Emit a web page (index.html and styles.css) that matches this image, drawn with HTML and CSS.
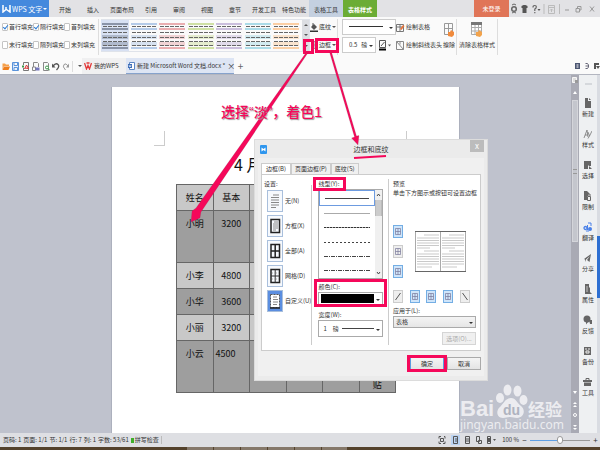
FILE: index.html
```html
<!DOCTYPE html>
<html lang="zh-CN">
<head>
<meta charset="utf-8">
<title>WPS 文字</title>
<link rel="stylesheet" href="styles.css">
</head>
<body>
<header class="titlebar">
  <button class="brand"><svg width="9" height="8" viewBox="0 0 9 8"><path d="M1 0v7l3-2.500V2M4.500 4.500L8 7V0" fill="none" stroke="#fff" stroke-width="1.500"/></svg><span>WPS 文字</span><i class="caret"></i></button>
  <nav class="menu">
    <a href="#">开始</a><a href="#">插入</a><a href="#" class="wide">页面布局</a><a href="#">引用</a><a href="#">审阅</a><a href="#">视图</a><a href="#">章节</a><a href="#" class="wide">开发工具</a><a href="#" class="wide">特色功能</a><a href="#" class="tool">表格工具</a><a href="#" class="tool current">表格样式</a>
  </nav>
  <button class="login">未登录</button>
  <div class="window-tools">
    <svg width="90" height="12" viewBox="0 0 90 12" fill="none" stroke="#666">
      <circle cx="5" cy="6" r="2.300" stroke-width="1.500"/><path d="M3 10l2-1 2 1M3 2l2-1 2 1"/>
      <path d="M12.500 3l2-1h2l2 1v2h-1v5h-4V5h-1z" fill="#555" stroke="none"/>
      <path d="M24 4.500q0-2 1.700-2t1.600 1.600q0 1.200-1.500 2V8M25.800 9v1.300" stroke-width="1.200"/><path d="M28.500 6h3l-1.500 2z" fill="#555" stroke="none"/>
      <path d="M35 1v10M50.500 1v10" stroke="#bbb"/><path d="M39.500 2.500h6v8h-6zM39.500 4.500h6M42.500 9V6M41 7.500L42.500 6 44 7.500" stroke="#bbb"/>
      <path d="M56 7h4" stroke="#999"/><path d="M67 5.500h3.500V9H67zM68.500 5V3.500H72V7h-1" stroke="#999"/><path d="M81 3.500l4 5M85 3.500l-4 5" stroke="#999"/>
    </svg>
  </div>
</header>

<section class="ribbon">
  <div class="fills">
    <label><input type="checkbox" checked>首行填充</label><label><input type="checkbox" checked>隔行填充</label><label><input type="checkbox">首列填充</label>
    <label><input type="checkbox">末行填充</label><label><input type="checkbox">隔列填充</label><label><input type="checkbox">末列填充</label>
  </div>
  <div class="gallery">
    <button class="swatch slate chosen" aria-label="样式 1"><svg viewBox="0 0 26 26"><use href="#sw"/></svg></button>
    <button class="swatch blue" aria-label="样式 2"><svg viewBox="0 0 26 26"><use href="#sw"/></svg></button>
    <button class="swatch red" aria-label="样式 3"><svg viewBox="0 0 26 26"><use href="#sw"/></svg></button>
    <button class="swatch green" aria-label="样式 4"><svg viewBox="0 0 26 26"><use href="#sw"/></svg></button>
    <button class="swatch purple" aria-label="样式 5"><svg viewBox="0 0 26 26"><use href="#sw"/></svg></button>
    <button class="swatch cyan" aria-label="样式 6"><svg viewBox="0 0 26 26"><use href="#sw"/></svg></button>
    <button class="swatch orange" aria-label="样式 7"><svg viewBox="0 0 26 26"><use href="#sw"/></svg></button>
    <div class="gallery-scroll"><button aria-label="上"><i class="caret up"></i></button><button aria-label="下"><i class="caret"></i></button><button aria-label="更多"><i class="caret"></i></button></div>
  </div>
  <div class="stack shade">
    <button><svg width="8" height="9" viewBox="0 0 8 9"><path d="M1 4l3-3 3 3-3 3z" fill="#555"/><path d="M3 3V0" stroke="#555"/><path d="M0 7.500h8v1.500H0z" fill="#333"/></svg>底纹<i class="caret"></i></button>
    <button><svg width="8" height="8" viewBox="0 0 8 8"><path d="M1.500.5h5v7h-5zM1.500 4h5M4 .5v7" fill="none" stroke="#999"/></svg>边框<i class="caret"></i></button>
  </div>
  <div class="stack pens">
    <div class="picker"><svg width="52" height="13" viewBox="0 0 52 13"><path d="M6 6.500h34" stroke="#333"/></svg><select aria-label="线型"><option></option></select></div>
    <div class="row"><div class="picker small"><select aria-label="粗细"><option>0.5&nbsp;&nbsp; 磅</option></select></div>
    <button aria-label="边框颜色"><svg width="12" height="11" viewBox="0 0 12 11"><path d="M.5.500h6v7h-6zM2 6l3.500-4" fill="none" stroke="#555"/><path d="M0 8.500h7v2H0z"/><path d="M9 4.500h3l-1.500 2z" fill="#555"/></svg></button></div>
  </div>
  <div class="stack draw">
    <button><svg width="9" height="9" viewBox="0 0 9 9"><path d="M.5 1.500h7v7h-7zM.5 4h7M4 1.500v7" fill="none" stroke="#777"/><path d="M4 6l3-4 1.500 1-3 4z" fill="#e8743b"/></svg>绘制表格</button>
    <button><svg width="9" height="9" viewBox="0 0 9 9"><path d="M.5.5h7v8h-7zM.5.500l7 8M4 .5v3" fill="none" stroke="#888"/></svg>绘制斜线表头</button>
  </div>
  <button class="big eraser"><svg width="12" height="15" viewBox="0 0 12 15"><path d="M1.500 1.500h8v11h-8zM1.500 6.500h8M5.500 1.500v11" fill="none" stroke="#999"/><path d="M5 10h2l1-2 3 2v3l-2 2-4-1z" fill="#f08a3c"/></svg>擦除</button>
  <button class="big clear"><svg width="12" height="15" viewBox="0 0 12 15"><path d="M.5.500h10v12H.5zM.5 5.500h10M.5 9h10M4 3v9.500M7.500 3v9.500" fill="#fff" stroke="#aaa"/><path d="M0 0h11v3H0z" fill="#777"/><path d="M5 10h2l1-2 3 2v3l-2 2-4-1z" fill="#f2a34c"/></svg>清除表格样式</button>
</section>

<div class="filebar">
  <div class="quick">
    <button aria-label="打开"><svg viewBox="0 0 8 9"><path d="M.5 8V1.500h2.500l1 1h3V4H2L.5 8" fill="#f5a04a"/><path d="M2 4.500h6L6.500 8h-6z" fill="#ee7d1b"/></svg></button>
    <button aria-label="保存"><svg viewBox="0 0 8 9"><path d="M.5.500h6v8h-6zM2 .5v3h3.500v-3M2 8.500v-3h3.500v3" fill="#eaf2fd" stroke="#5a93da"/></svg></button>
    <button aria-label="输出PDF"><svg viewBox="0 0 8 9"><path d="M1.500 3V.5h5v8h-5V6" fill="none" stroke="#777"/><path d="M2.500 7l2-4 2 3.500-3.500-.5" fill="none" stroke="#d33"/><path d="M0 3.500h2v2H0z" fill="#3b9a4a"/></svg></button>
    <button aria-label="打印"><svg viewBox="0 0 8 9"><path d="M1.500 5V.5h4l1 1V5M.5 5h3v3.500h-3z" fill="none" stroke="#888"/><path d="M3.500 5.500h4v3h-4z" fill="#7476bd"/></svg></button>
    <button aria-label="预览"><svg viewBox="0 0 8 9"><path d="M1.500 8.500v-8h4l1 1v7z" fill="none" stroke="#888"/><circle cx="5" cy="5.500" r="1.500" fill="#fff" stroke="#3b9a4a"/><path d="M6 6.500L8 8.500" stroke="#3b9a4a"/></svg></button>
    <button aria-label="撤销"><svg viewBox="0 0 8 9"><path d="M1 4q3-3.500 5-1.500T4.500 8" fill="none" stroke="#555" stroke-width="1.300"/><path d="M0 1.500v4h3.500z" fill="#555"/></svg></button>
    <button aria-label="恢复"><svg viewBox="0 0 8 9"><path d="M6 4Q4 .5 2 2.500T3.500 8" fill="none" stroke="#999"/><path d="M7 1.500v4H4z" fill="#999"/></svg></button>
    <i class="divider"></i><i class="caret"></i>
  </div>
  <a href="#" class="file"><svg width="8" height="8" viewBox="0 0 8 8"><path d="M.5 1l2 6L4 3.500 5.500 7l2-6M2.500 1h3" fill="none" stroke="#e33a3a" stroke-width="1.300"/></svg>我的WPS</a>
  <a href="#" class="file open"><svg width="7" height="8" viewBox="0 0 7 8"><path d="M1.500.5h5v7h-5z" fill="#fff" stroke="#5c86c5"/><path d="M0 2h4v4H0z" fill="#3c6db8"/><path d="M1 3l.5 2L2 3.500 2.500 5 3 3" fill="none" stroke="#fff" stroke-width=".5"/></svg><span>新建 Microsoft Word 文档.docx *</span><b>×</b></a>
  <button class="plus" aria-label="新标签">+</button>
  <svg class="views" width="26" height="8" viewBox="0 0 26 8"><path d="M1 1h5v6H1z" fill="#4c5672"/><path d="M2.500 3h2M2.500 5h2" stroke="#fff"/><path d="M11.500 1.500h2l1 1.500v2l-1 1.500h-2M11.500 4h2.500" fill="none" stroke="#667"/><path d="M20 1h5v2h-3v4h-2z" fill="#555"/><path d="M22 4h4l-2 3z" fill="#555"/></svg>
</div>

<main class="work">
  <div class="desk">
    <article class="page">
      <div class="marks"><i></i><i class="right"></i></div>
      <h1>4 月</h1>
      <table>
        <tr class="light"><th>姓名</th><th>基本</th><th></th><th></th><th></th><th></th></tr>
        <tr class="tall"><td>小明</td><td>3200</td><td></td><td></td><td></td><td></td></tr>
        <tr class="light"><td>小李</td><td>4800</td><td></td><td></td><td></td><td></td></tr>
        <tr><td>小华</td><td>3600</td><td></td><td></td><td></td><td></td></tr>
        <tr class="light"><td>小丽</td><td>3200</td><td></td><td></td><td></td><td></td></tr>
        <tr class="tall"><td>小云</td><td class="start">4500</td><td></td><td></td><td></td><td class="end">贴</td></tr>
      </table>
    </article>
    <svg class="watermark" width="112" height="52" viewBox="0 0 112 52" fill="#fff">
      <text x="1" y="35" class="wm-logo">Bai</text>
      <ellipse cx="41" cy="17" rx="4" ry="5"/><ellipse cx="48.500" cy="9" rx="4" ry="5.500"/><ellipse cx="58.500" cy="10" rx="4" ry="5.500"/><ellipse cx="64.500" cy="19" rx="4" ry="5"/>
      <path d="M52 17c5 0 6 5 10 8 5 4 3 12-4 12-3 0-4-1-7-1s-4 1-7 1c-7 0-7-8-3-11 4-4 6-9 11-9z"/>
      <text x="44" y="34" class="wm-du">du</text><text x="69" y="35" class="wm-cn">经验</text><text x="1" y="48" class="wm-url">jingyan.baidu.com</text>
    </svg>
  </div>
  <div class="vscroll">
    <svg width="8" height="25" viewBox="0 0 8 25"><path d="M1.500 2.500h4v5h-4z" fill="#ddd" stroke="#f5f5f5"/><path d="M4 5h3v3H4z" fill="#999"/><path d="M2 19l2-3 2 3z" fill="#fff"/></svg>
    <div class="thumb"><i></i></div>
    <svg class="jump" width="8" height="46" viewBox="0 0 8 46" fill="#fff"><path d="M2 4h4L4 7zM2 17l2-2 2 2zM2 20l2-2 2 2zM2 38h4l-2 2zM2 41h4l-2 2z"/><circle cx="4" cy="28" r="1.500" fill="none" stroke="#fff"/></svg>
  </div>
  <aside class="side">
    <i class="grip"></i>
    <button><svg viewBox="0 0 9 10"><path d="M2 0h3v3h3v7H2z"/><path d="M6 0l2 2H6z"/></svg>新建</button>
    <button><svg viewBox="0 0 9 10"><path d="M1 9l3-8 1 7M2 6h3M5 3l1.500 4L9 2M6.500 7L5 9.500" fill="none" stroke="#777" stroke-width=".8"/></svg>样式</button>
    <button><svg viewBox="0 0 9 10"><path d="M1 1h7v5H6L5 5v4H1z"/><path d="M6 6l3 3H6z"/></svg>选择</button>
    <button><svg viewBox="0 0 9 10"><path d="M1 0h3l2 2v3H4v4H1z"/><path d="M4.500 5.500h3v4h-3zM5 5V3h2v2" fill="#eee" stroke="#666"/></svg>限制</button>
    <button class="translate"><svg viewBox="0 0 9 10"><circle cx="2.500" cy="6" r="1.500" fill="none" stroke="#4a80e8" stroke-width="1.300"/><path d="M4.500 8V3M5 1h3v3M3 9h3" fill="none" stroke="#4a80e8"/><circle cx="7" cy="7" r="2" fill="#4a80e8"/></svg>翻译</button>
    <button><svg viewBox="0 0 9 10"><path d="M1 6l7-5-1.500 8L4 7l3-4-4 3.500V9L2 6.500z"/></svg>分享</button>
    <button><svg viewBox="0 0 9 10"><path d="M2 0h4v3l1 1v4l2 2H2z"/><path d="M3 3h2M3 5h2M3 7h2" stroke="#eee" stroke-width=".7"/></svg>属性</button>
    <button><svg viewBox="0 0 9 10"><circle cx="4" cy="4" r="3.500"/><path d="M3 7v2.500L5 7M6 5h3v4H7z"/></svg>反馈</button>
    <button><svg viewBox="0 0 9 10"><path d="M1 1h7v8H1z"/><path d="M2 3h2M5 3h2M3 7V5h3v2z" fill="none" stroke="#eee"/></svg>备份</button>
    <button><svg viewBox="0 0 9 10"><path d="M3 3V1.500h3V3" fill="none" stroke="#666"/><path d="M0 3h9v2H0zM1 5.500h7V9H1z"/></svg>工具</button>
  </aside>
  <div class="edge"><i></i></div>
</main>

<footer class="status">
  <span>页码: 1</span><span>页面: 1/1</span><span>节: 1/1</span><span>行: 7</span><span>列: 1</span><span>字数: 53/61</span><span class="spell"><i></i>拼写检查</span>
  <div class="zoom">
    <svg width="58" height="10" viewBox="0 0 58 10"><path d="M13 0h9v10h-9z" fill="#bcd4f2"/><g fill="none" stroke="#555"><path d="M3 1.500L1 1.500v2M6 1.500h1v2M1 6.500v2h2M7 6.500v2H5M2.500 3.500h3v3h-3z"/><path d="M15.500 1.500h4v7h-4zM17 4h2M17 6h2M27.500 1.500h4v7h-4zM27.500 4h4M27.500 6h4M38.500 1.500h3v5h-3zM40.500 5.500h3v3h-3zM49.500 1.500h3v7h-3z"/><path d="M51 3v4" stroke-width="2"/></g><path d="M55 4h3l-1.500 2z" fill="#555"/></svg>
    <output>100 %</output><button aria-label="缩小">−</button><input type="range" aria-label="显示比例" value="50"><button aria-label="放大">+</button>
  </div>
</footer>
<div class="taskbar"><i></i></div>

<section class="dialog" role="dialog" aria-label="边框和底纹">
  <div class="dialog-head">
    <svg width="7" height="9" viewBox="0 0 7 9"><rect width="7" height="9" rx="1" fill="#2f96ee"/><path d="M1.500 2.500v4l2-1.500 2 1.500v-4l-2 1.500z" fill="#fff"/></svg>
    <h2>边框和底纹</h2><button aria-label="关闭">x</button>
  </div>
  <div class="client">
    <div class="tabs"><button class="active">边框(B)</button><button>页面边框(P)</button><button>底纹(S)</button></div>
    <div class="panel">
      <fieldset class="presets">
        <legend>设置:</legend>
        <button><svg viewBox="0 0 14 20"><path d="M5 4h6M3 6.500h8M3 9h8M3 11.500h8M3 14h8M3 16.500h5" stroke="#888"/></svg><span>无(N)</span></button>
        <button><svg viewBox="0 0 14 20"><path d="M3 3.500h8.500v13H3z" fill="none" stroke="#222" stroke-width="1.500"/><path d="M6 6h4M5 8h5M5 10h5M5 12h5M5 14h3" stroke="#888"/></svg><span>方框(X)</span></button>
        <button><svg viewBox="0 0 14 20"><path d="M3 3.500h8.500v13H3zM3 10h8.500M7.200 3.500v13" fill="none" stroke="#222" stroke-width="1.500"/></svg><span>全部(A)</span></button>
        <button><svg viewBox="0 0 14 20"><path d="M3 3.500h8.500v13H3z" fill="none" stroke="#222" stroke-width="1.500"/><path d="M3 10h8.500M7.200 3.500v13" stroke="#333"/><path d="M4 7h7M4 13h7" stroke="#aaa" stroke-dasharray="1 1"/></svg><span>网格(D)</span></button>
        <button class="picked"><svg viewBox="0 0 14 20"><path d="M2.500 3.500h9v13h-9z" fill="#fff" stroke="#555" stroke-dasharray="2 1"/><path d="M5 6h4M5 8.500h5M5 11h5M5 13.500h4" stroke="#888"/><path d="M2 17h10" stroke="#222" stroke-width="1.500"/></svg><span>自定义(U)</span></button>
      </fieldset>
      <div class="strokes">
        <span class="cap">线型(Y):</span>
        <div class="list">
          <div class="lines" role="listbox" aria-label="线型">
            <button role="option" aria-selected="true"><i></i></button><button role="option"><i class="thin"></i></button><button role="option"><i class="fine"></i></button><button role="option"><i class="dot"></i></button><button role="option"><i class="dashdot"></i></button><button role="option"><i class="dashdot"></i></button>
          </div>
          <div class="listbar"><svg width="7" height="6" viewBox="0 0 7 6"><path d="M2 4l1.500-2L5 4" fill="none" stroke="#444"/></svg><b></b><svg width="7" height="6" viewBox="0 0 7 6"><path d="M2 2l1.500 2L5 2" fill="none" stroke="#444"/></svg></div>
        </div>
        <label class="cap" for="colour">颜色(C):</label>
        <div class="drop colour"><i></i><select id="colour"><option></option></select></div>
        <label class="cap" for="weight">宽度(W):</label>
        <div class="drop weight"><i></i><select id="weight"><option>1　磅</option></select></div>
      </div>
      <div class="preview">
        <span class="cap">预览</span>
        <p>单击下方图示或按钮可设置边框</p>
        <div class="sample">
          <div class="sides">
            <button class="on" aria-label="上框线"><svg viewBox="0 0 8 11"><use href="#grid"/></svg></button><button aria-label="横线"><svg viewBox="0 0 8 11"><use href="#grid"/></svg></button><button class="on" aria-label="下框线"><svg viewBox="0 0 8 11"><use href="#grid"/></svg></button>
          </div>
          <svg class="sheet" width="51" height="41" viewBox="0 0 51 41"><path d="M.5 1v39M25.500 1v39M50.500 1v39" stroke="#aaa"/><path d="M0 .5h51M0 40.500h51" stroke="#666"/><path d="M9 4h15M2 7h22M2 9.500h22M2 12h22M2 14.500h22M2 17h13M9 20h15M2 23h22M2 25.500h22M2 28h22M2 30.500h22M2 33h22M2 36h15M34 4h15M27 7h22M27 9.500h22M27 12h22M27 14.500h22M27 17h13M34 20h15M27 23h22M27 25.500h22M27 28h22M27 30.500h22M27 33h22M27 36h15" stroke="#bbb" stroke-width=".8"/></svg>
        </div>
        <div class="edges">
          <button aria-label="斜线"><svg viewBox="0 0 8 11"><path d="M1.500 9l5-7" stroke="#555"/></svg></button><button class="on" aria-label="左框线"><svg viewBox="0 0 8 11"><use href="#grid"/></svg></button><button class="on" aria-label="竖线"><svg viewBox="0 0 8 11"><use href="#grid"/></svg></button><button class="on" aria-label="右框线"><svg viewBox="0 0 8 11"><use href="#grid"/></svg></button><button aria-label="反斜线"><svg viewBox="0 0 8 11"><path d="M1.500 2l5 7" stroke="#555"/></svg></button>
        </div>
        <label class="cap" for="apply">应用于(L):</label>
        <div class="drop apply"><select id="apply"><option>表格</option></select></div>
        <button class="plain" disabled>选项(O)...</button>
      </div>
    </div>
    <div class="actions"><button class="plain ok">确定</button><button class="plain">取消</button></div>
  </div>
</section>

<svg class="notes" width="600" height="450" viewBox="0 0 600 450" aria-hidden="true">
  <g fill="none" stroke="#f5085a" stroke-width="3">
    <path d="M304.500 40.500h8v12h-8zM316.500 39.500h21v12h-21z"/>
    <path d="M314.500 178.500h30v11h-30zM315.500 280.500h70v25h-70zM408.500 356.500h37v14h-37z"/>
    <path d="M354 158l32-2" stroke-width="2"/>
  </g>
  <path d="M306.500 52h2L201 212l-1 6-9 4 1-11 4-3zM329.500 52h2l25 84 2.500-.5-1 9.500-6.500-7 3-1z" fill="#f5085a" stroke="#555" stroke-opacity=".3" stroke-width=".5"/>
  <text x="221" y="117">选择“淡”，着色1</text>
</svg>

<svg class="defs" width="0" height="0">
  <symbol id="sw" viewBox="0 0 26 26"><path class="band" d="M0 1h26M0 6h26M0 25h26" stroke-width="2"/><path class="tint" d="M0 14h26M0 21h26" stroke-width="4"/><path d="M1 3.500h24M1 9.500h24M1 14.500h24M1 18.500h24M1 22.500h24" stroke="#666" stroke-dasharray="4 1"/></symbol>
  <symbol id="grid" viewBox="0 0 8 11"><path d="M1.500 2.500h5v6h-5zM1.500 5.500h5M4 2.500v6" fill="none" stroke="#779" stroke-width=".7"/></symbol>
</svg>
</body>
</html>
```
FILE: styles.css
```css
* { box-sizing: border-box; }
body {
  margin: 0; height: 100vh; display: flex; flex-direction: column; overflow: hidden; position: relative;
  font: 6px/8px "Noto Sans CJK SC", sans-serif; color: #333; background: #fafafa;
}
button, select, input { font: inherit; color: inherit; margin: 0; padding: 0; }
button { border: 0; background: none; white-space: nowrap; }
select { appearance: none; border: 0; background: none; border-radius: 0; }
a { color: inherit; text-decoration: none; white-space: nowrap; }
svg { flex: none; display: block; }
.defs { position: absolute; }
.caret { flex: none; border: solid transparent; border-width: 2px 2px 0; border-top-color: #555; }
.caret.up { transform: rotate(180deg); }

.titlebar { flex: none; height: 17px; display: flex; background: #e2e2e5; }
.brand { width: 49px; display: flex; align-items: center; gap: 1px; padding-left: 2px; background: #4489dd; color: #fff; font-size: 7px; }
.brand span { flex: 1; text-align: left; }
.brand .caret { border-top-color: #fff; margin-right: 2px; }
.menu { flex: 1; display: flex; padding-left: 2px; }
.menu a { width: 28px; text-align: center; line-height: 20px; }
.menu .wide { width: 30px; }
.menu .tool { width: 34px; background: #c4d0e0; }
.menu .tool.current { background: #6bac35; color: #fff; font-weight: bold; }
.login { width: 35px; background: #e07558; color: #fff; }
.window-tools { width: 91px; display: flex; align-items: center; }

.ribbon { flex: none; height: 41px; display: flex; align-items: flex-start; padding: 2px 0 3px 2px; }
.fills { display: grid; grid-template: repeat(2, 16px) / repeat(3, 31px); row-gap: 2px; width: 97px; height: 36px; border-right: 1px solid #ddd; }
.fills label { display: flex; align-items: center; gap: 1px; white-space: nowrap; }
.fills input { appearance: none; width: 6px; height: 8px; border: 1px solid #c4c4c4; border-radius: 1px; background: #fff; position: relative; }
.fills input:checked::after { content: ""; position: absolute; left: 1px; top: 0; width: 2px; height: 4px; border: solid #2f7fd8; border-width: 0 1px 1px 0; transform: rotate(40deg); }
.gallery { display: flex; margin-left: 2px; height: 33px; border: 1px solid #dfe3ea; border-left: 0; }
.swatch { width: 28px; display: grid; place-items: center; }
.swatch:nth-child(2n) { width: 29px; }
.swatch svg { width: 26px; height: 26px; }
.chosen { background: #d8e1f3; }
.band { stroke: currentColor; }
.tint { stroke: currentColor; opacity: .5; }
.swatch.slate { color: #8a94a8; } .swatch.blue { color: #b5cbe8; } .swatch.red { color: #eaaeb0; } .swatch.green { color: #cfe0a4; }
.swatch.purple { color: #cbbfdd; } .swatch.cyan { color: #abdbe8; } .swatch.orange { color: #fbcfa4; }
.gallery-scroll { width: 7px; margin-left: 2px; display: grid; background: #dcdee2; }
.gallery-scroll button { display: grid; place-items: center; }
.stack { display: flex; flex-direction: column; gap: 2px; }
.stack button { display: flex; align-items: center; gap: 1px; height: 16px; }
.shade { width: 28px; height: 36px; border-right: 1px solid #ddd; }
.pens { margin-left: 4px; width: 54px; }
.picker { position: relative; height: 16px; border: 1px solid #ccc; background: #fff; width: 54px; }
.picker svg { position: absolute; }
.picker select { position: relative; width: 100%; height: 14px; padding-left: 6px; }
.picker::after, .drop::after { content: ""; position: absolute; right: 2px; top: 50%; border: solid transparent; border-width: 2px 2px 0; border-top-color: #333; }
.picker.small { width: 34px; }
.row { display: flex; gap: 3px; }
.draw { width: 46px; }
.big { display: flex; flex-direction: column; align-items: center; gap: 4px; height: 36px; padding-top: 3px; border-right: 1px solid #ddd; }
.eraser { width: 15px; }
.clear { width: 41px; }

.filebar { flex: none; height: 16px; display: flex; align-items: stretch; }
.quick { width: 82px; display: flex; align-items: center; gap: 2px; padding-left: 2px; }
.quick svg { width: 8px; height: 9px; }
.divider { width: 1px; height: 11px; background: #ddd; margin-right: 3px; }
.file { display: flex; align-items: center; gap: 2px; width: 44px; padding-left: 2px; background: #f0f0f1; }
.file.open { width: 108px; background: #dde5f4; border-bottom: 1px solid #86a2cc; }
.file span { flex: 1; }
.file b { font-weight: normal; font-size: 8px; margin-right: 2px; }
.plus { width: 13px; font-size: 10px; color: #666; }
.views { margin: 4px 0 0 auto; }

.work { flex: 1; min-height: 0; display: flex; background: #bfc2cd; border-top: 1px solid #b3b6c0; }
.desk { flex: 1; display: flex; position: relative; padding: 12px 111px 0; }
.page { flex: 1; background: #fff; border-left: 1px solid #acb0bd; border-right: 1px solid #acb0bd; overflow: hidden; }
.marks { display: flex; justify-content: space-between; padding: 44px 42px 0; }
.marks i { width: 11px; height: 15px; border: solid #ccc; border-width: 0 1px 1px 0; }
.marks .right { border-width: 0 0 1px 1px; }
.page h1 { margin: 7px 0 8px 122px; font: 16px/23px "Noto Sans CJK SC", sans-serif; color: #111; }
.page table { margin-left: 64px; width: 220px; table-layout: fixed; border-collapse: collapse; background: #9e9e9e; font-size: 9px; line-height: 14px; color: #111; }
.page td, .page th { height: 26px; padding: 6px 0 0; border: 1px solid #666; font-weight: normal; text-align: center; vertical-align: top; }
.page .light { background: #c8c8c8; }
.page .tall td { height: 52px; }
.page .start { text-align: left; padding-left: 2px; }
.page .end { vertical-align: bottom; }
.watermark { position: absolute; right: 0; bottom: 0; opacity: .7; }
.wm-logo { font: bold 22px "Liberation Sans", sans-serif; }
.wm-du { font: bold 14px "Liberation Sans", sans-serif; fill: #a9adba; }
.wm-cn { font: bold 17px "Noto Sans CJK SC", sans-serif; }
.wm-url { font: 12px "Noto Sans", sans-serif; }
.vscroll { width: 8px; background: #a9aab4; display: flex; flex-direction: column; }
.thumb { height: 142px; margin: 0 1px; border: 1px solid #d4d5da; background: #c4c6cd; display: grid; place-items: center; }
.thumb i { width: 4px; height: 5px; border: solid #999; border-width: 1px 0; }
.jump { margin-top: auto; }
.side { width: 18px; background: #eef0f2; display: flex; flex-direction: column; align-items: center; }
.grip { width: 7px; height: 2px; background: #d5d8dc; margin: 8px 0 10px; }
.side button { height: 31px; padding-top: 3px; display: flex; flex-direction: column; align-items: center; gap: 2px; }
.side svg { width: 9px; height: 10px; fill: #666; }
.edge { width: 3px; background: #d9dce2; padding-top: 161px; }
.edge i { display: block; height: 62px; background: #2d6fd2; }

.status { flex: none; height: 14px; display: flex; align-items: center; gap: 2px; padding: 0 2px 0 3px; background: #dedfe3; white-space: nowrap; }
.spell { display: flex; align-items: center; gap: 1px; padding-right: 2px; border-right: 1px solid #bbb; }
.spell i { width: 3px; height: 5px; background: #3fae2a; }
.zoom { margin-left: auto; display: flex; align-items: center; gap: 3px; }
.zoom svg { margin-right: 3px; }
.zoom button { width: 5px; font-size: 8px; }
.zoom input { appearance: none; width: 60px; height: 8px; background: linear-gradient(90deg, #5f9fe4 50%, #999 50%) center / 100% 1px no-repeat; }
.zoom input::-webkit-slider-thumb { appearance: none; width: 6px; height: 8px; border: 1px solid #999; border-radius: 3px; background: #fff; }
.taskbar { flex: none; height: 3px; background: #54422c; padding-left: 187px; }
.taskbar i { display: block; width: 160px; height: 3px; background: repeating-linear-gradient(90deg, #85786a 0 26px, #54422c 26px 27px); }

.dialog { position: absolute; left: 254px; top: 139px; width: 234px; padding: 0 3px 4px; background: #ebebeb; border: 1px solid #dcdcdc; }
.dialog-head { height: 18px; display: flex; align-items: center; padding-left: 2px; }
.dialog-head h2 { flex: 1; margin: 0; text-align: center; font: 7px/10px "Noto Sans CJK SC", sans-serif; padding-left: 5px; }
.dialog-head button { align-self: flex-start; width: 14px; height: 12px; background: #bcbcbc; color: #fff; font-size: 8px; line-height: 10px; }
.client { background: #f0f0f0; padding: 5px 3px 3px; }
.tabs { display: flex; height: 11px; }
.tabs button { border: 1px solid #ccc; border-bottom: 0; padding: 0 3px; }
.tabs .active { background: #fff; padding: 0 4px; }
.panel { height: 177px; display: flex; gap: 3px; background: #fff; border: 1px solid #ccc; padding: 4px 3px 5px 2px; }
.cap { display: block; height: 10px; line-height: 9px; white-space: nowrap; }
.presets { border: 0; margin: 0; padding: 0; width: 50px; border-right: 1px solid #ccc; display: flex; flex-direction: column; gap: 3px; }
.presets legend { padding: 0; height: 11px; line-height: 9px; }
.presets button { display: flex; align-items: center; gap: 2px; height: 22px; padding-left: 3px; }
.presets svg { width: 16px; height: 22px; border: 1px solid #a9bfdc; background: #f6f9fd; }
.presets .picked svg { background: #5b8ee0; }
.strokes { width: 72px; padding: 0 2px 0 3px; }
.list { height: 90px; display: flex; border: 1px solid #aaa; margin-bottom: 3px; }
.lines { flex: 1; display: flex; flex-direction: column; }
.lines button { flex: 1; display: grid; align-items: center; padding: 0 5px; }
.lines [aria-selected] { border: 1px solid #6d9be0; }
.lines i { border-top: 1px solid #444; }
.lines .thin { border-top-color: #aaa; }
.lines .fine { height: 1px; border: 0; background: repeating-linear-gradient(90deg, #333 0 2px, #aaa 2px 3px); }
.lines .dot { height: 1px; border: 0; background: repeating-linear-gradient(90deg, #444 0 2px, #fff 2px 4px); }
.lines .dashdot { height: 1px; border: 0; background: repeating-linear-gradient(90deg, #444 0 4px, #fff 4px 5px, #444 5px 6px, #fff 6px 7px); }
.listbar { width: 7px; display: flex; flex-direction: column; background: #f0f0f0; padding: 2px 0; }
.listbar b { height: 16px; margin: 2px 0 auto; background: #ccc; border: solid #bbb; border-width: 0 1px; }
.drop { position: relative; border: 1px solid #aaa; background: linear-gradient(#f4f4f4, #e6e6e6); height: 13px; }
.drop select { width: 100%; height: 100%; display: block; padding-left: 2px; position: relative; }
.drop i { position: absolute; }
.colour { margin-bottom: 5px; background: #fff; }
.colour i { left: 2px; right: 8px; top: 1px; bottom: 1px; background: #000; }
.weight { height: 17px; background: #fff; }
.weight select { padding-left: 4px; }
.weight i { left: 23px; right: 8px; top: 7px; height: 1px; background: #444; }
.preview { flex: 1; border-left: 1px solid #ccc; padding-left: 4px; display: flex; flex-direction: column; }
.preview p { margin: 0; white-space: nowrap; }
.sample { display: flex; justify-content: space-between; align-items: center; margin-top: 28px; padding-right: 11px; }
.sides { display: grid; gap: 7px; }
.sides button, .edges button { width: 10px; height: 13px; border: 1px solid #ccc; background: #eee; }
.preview .on { border-color: #74aee4; background: #cfe5fa; }
.sides svg, .edges svg { width: 8px; height: 11px; }
.edges { display: flex; justify-content: space-between; margin: 12px 7px 3px 0; }
.apply { margin: 0 1px 4px 0; }
.plain { height: 13px; width: 34px; border: 1px solid #aaa; background: linear-gradient(#f4f4f4, #e4e4e4); }
.plain:disabled { align-self: flex-end; margin-right: 1px; border-color: #d5d5d5; background: #f0f0f0; color: #aaa; }
.ok { border-color: #5a9be0; }
.actions { display: flex; justify-content: flex-end; gap: 3px; padding: 6px 0 3px; }

.notes { position: absolute; left: 0; top: 0; pointer-events: none; }
.notes text { font: 500 14px "Liberation Sans", "Noto Sans CJK SC", sans-serif; fill: #f5085a; text-shadow: 1px 1px 1px #999; }
```
